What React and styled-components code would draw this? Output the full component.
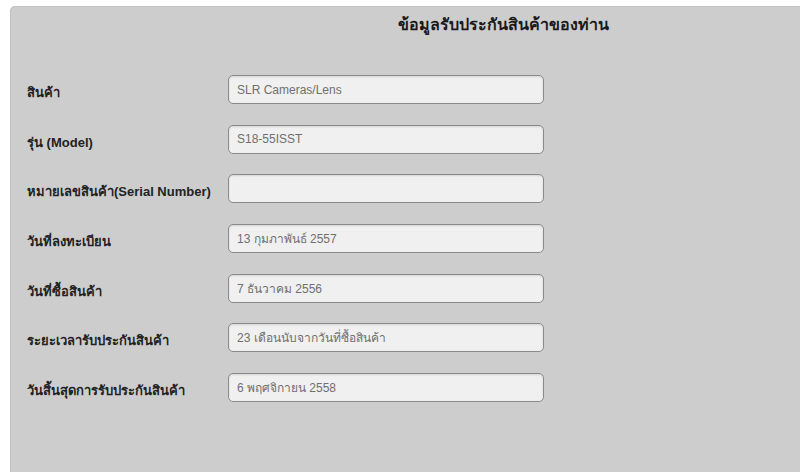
import { Fragment } from "react";
import styled, { createGlobalStyle } from "styled-components";

const GlobalStyle = createGlobalStyle`
  body {
    margin: 0;
    background: #ffffff;
    font-family: "Liberation Sans", "Noto Sans", "DejaVu Sans", sans-serif;
  }
`;

const Panel = styled.div`
  margin: 6px 0 0 10px;
  height: 466px;
  background-color: #cdcdcd;
  border-radius: 5px 0 0 0;
  box-shadow: inset 1px 1px 0 #c2c2c2;
  box-sizing: border-box;
  padding: 9px 0 0 17px;
`;

const Title = styled.h2`
  margin: 0;
  padding-left: 371px;
  font-size: 16px;
  font-weight: bold;
  color: #1a1a1a;
  line-height: 20px;
`;

const Form = styled.div`
  margin-top: 40px;
  display: grid;
  grid-template-columns: 201px 316px;
  grid-auto-rows: 29px;
  row-gap: 20.7px;
  align-items: center;
`;

const Label = styled.label`
  font-size: 13px;
  font-weight: bold;
  color: #222;
  padding-top: 6px;
`;

const Field = styled.div`
  height: 29px;
  box-sizing: border-box;
  border: 1px solid #8a8a8a;
  border-radius: 5px;
  background-color: #f0f0f0;
  box-shadow: inset 0 1px 2px rgba(0, 0, 0, 0.12);
  padding: 0 8px;
  display: flex;
  align-items: center;
  font-size: 12px;
  color: #6f6f6f;
`;

const rows = [
  ["สินค้า", "SLR Cameras/Lens"],
  ["รุ่น (Model)", "S18-55ISST"],
  ["หมายเลขสินค้า(Serial Number)", ""],
  ["วันที่ลงทะเบียน", "13 กุมภาพันธ์ 2557"],
  ["วันที่ซื้อสินค้า", "7 ธันวาคม 2556"],
  ["ระยะเวลารับประกันสินค้า", "23 เดือนนับจากวันที่ซื้อสินค้า"],
  ["วันสิ้นสุดการรับประกันสินค้า", "6 พฤศจิกายน 2558"],
];

export default function App() {
  return (
    <>
      <GlobalStyle />
      <Panel>
        <Title>ข้อมูลรับประกันสินค้าของท่าน</Title>
        <Form>
          {rows.map(([label, value]) => (
            <Fragment key={label}>
              <Label>{label}</Label>
              <Field>{value}</Field>
            </Fragment>
          ))}
        </Form>
      </Panel>
    </>
  );
}
